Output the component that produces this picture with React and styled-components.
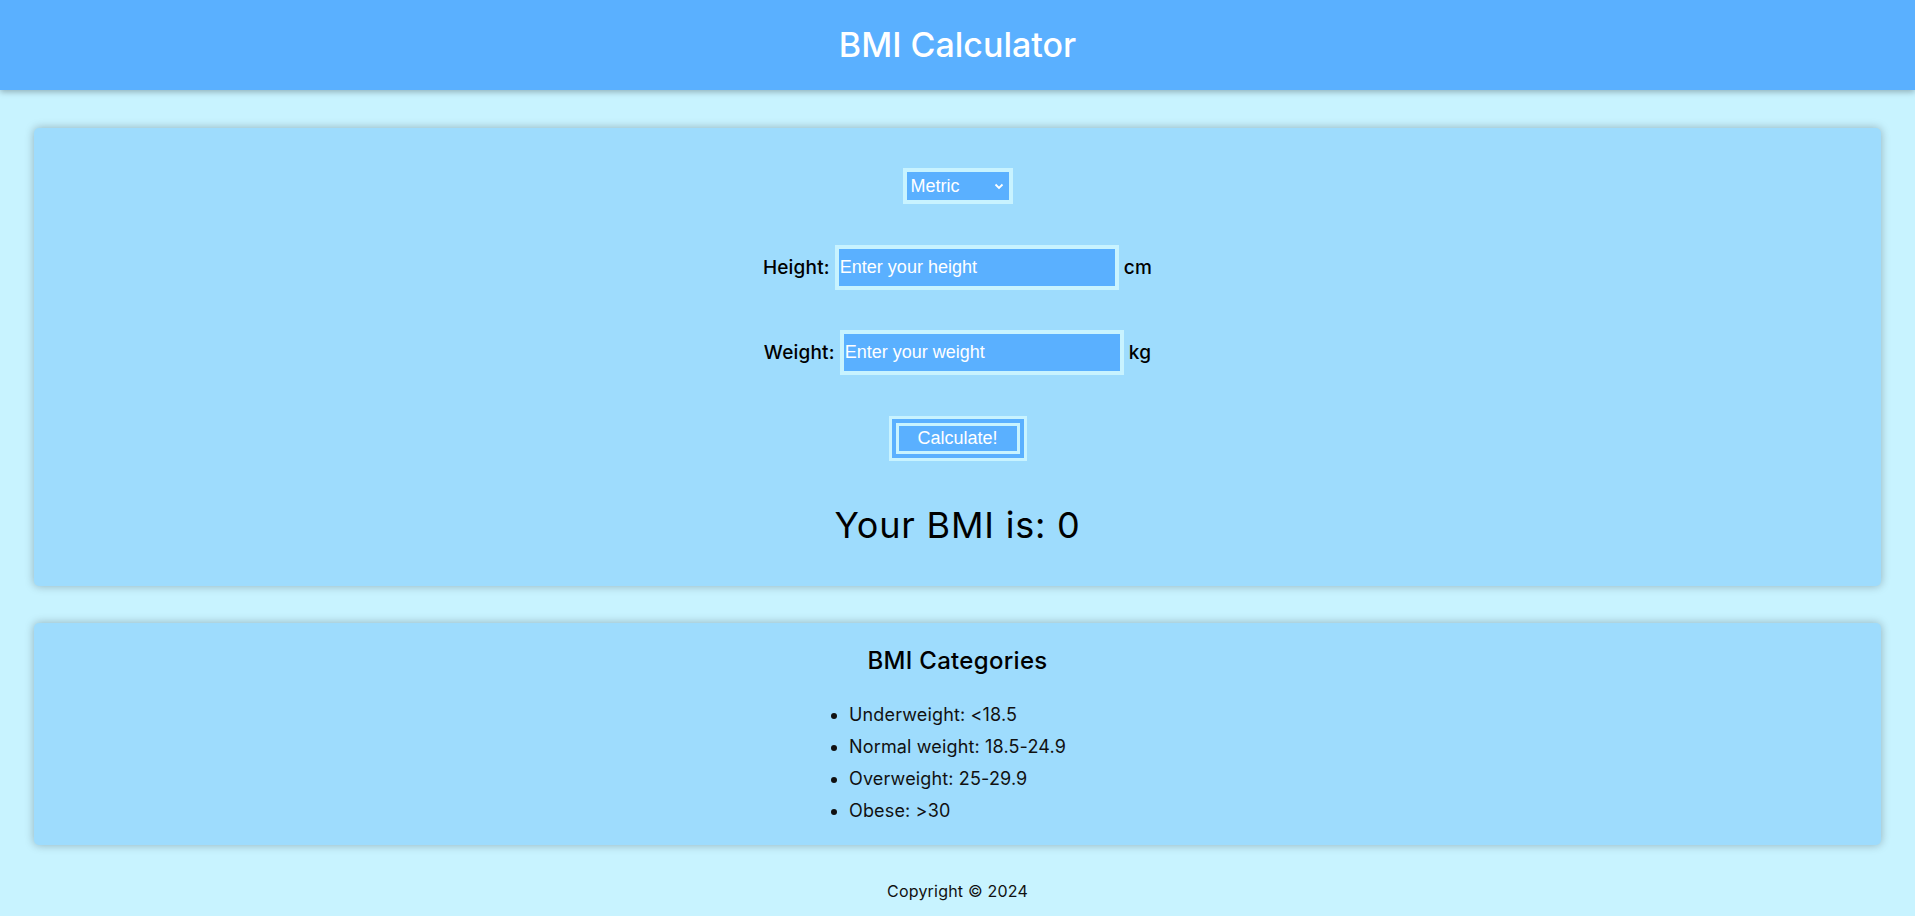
import React, { useState } from "react";
import styled, { createGlobalStyle } from "styled-components";

const GlobalStyle = createGlobalStyle`
  html, body {
    margin: 0;
    padding: 0;
    background: #c8f3ff;
    font-family: Inter, "Open Sans", "Noto Sans", sans-serif;
    color: #000;
  }
  * { box-sizing: border-box; }
`;

const Header = styled.header`
  height: 90px;
  background: #5ab0ff;
  display: flex;
  align-items: center;
  justify-content: center;
  box-shadow: 0 2px 6px rgba(0, 0, 0, 0.28);
  position: relative;
  z-index: 1;
`;

const Title = styled.h1`
  margin: 0;
  font-size: 34px;
  line-height: 40px;
  font-weight: 500;
  color: #fff;
`;

const Main = styled.main`
  display: flex;
  flex-direction: column;
  gap: 37px;
  padding: 38px 34px 0;
`;

const Card = styled.section`
  background: #9edcfd;
  border-radius: 5px;
  box-shadow: 0 0 10px rgba(0, 0, 0, 0.28);
`;

const CalcCard = styled(Card)`
  display: flex;
  flex-direction: column;
  align-items: center;
  gap: 40px;
  padding: 40px 0 39px;
`;

const SelectWrap = styled.div`
  position: relative;
  width: 110px;
  height: 36px;
  margin-bottom: 1px;
`;

const UnitSelect = styled.select`
  appearance: none;
  -webkit-appearance: none;
  width: 100%;
  height: 100%;
  border: 4px solid #c8f3ff;
  border-radius: 0;
  background: #5ab0ff;
  color: #fff;
  font-family: "Liberation Sans", Arial, sans-serif;
  font-size: 18px;
  padding: 0 4px;
  outline: none;
`;

const Chevron = styled.svg`
  position: absolute;
  right: 9px;
  top: 15px;
  pointer-events: none;
`;

const Row = styled.div`
  display: flex;
  align-items: center;
  gap: 5px;
`;

const Label = styled.label`
  font-size: 19px;
  font-weight: 500;
  letter-spacing: 0.2px;
`;

const Unit = styled.span`
  font-size: 19px;
  font-weight: 500;
  letter-spacing: 0.2px;
`;

const NumberInput = styled.input`
  width: 284px;
  height: 45px;
  border: 4px solid #c8f3ff;
  border-radius: 0;
  background: #5ab0ff;
  color: #fff;
  font-family: "Liberation Sans", Arial, sans-serif;
  font-size: 18px;
  padding: 0 0 0 1px;
  outline: none;
  &::placeholder {
    color: #fff;
    opacity: 1;
  }
`;

const CalcButton = styled.button`
  width: 138px;
  height: 45px;
  margin-top: 1px;
  border: 10px double #c8f3ff;
  background: #5ab0ff;
  color: #fff;
  font-family: "Liberation Sans", Arial, sans-serif;
  font-size: 18px;
  padding: 0;
  cursor: pointer;
`;

const Result = styled.p`
  margin: 2px 0 0;
  font-size: 36px;
  line-height: 44px;
  font-weight: 400;
  letter-spacing: 0.8px;
`;

const CategoryCard = styled(Card)`
  display: flex;
  flex-direction: column;
  align-items: center;
  padding: 23px 0 18px;
`;

const CategoryTitle = styled.h2`
  margin: 0;
  font-size: 24px;
  line-height: 30px;
  font-weight: 500;
  letter-spacing: 0.3px;
`;

const CategoryList = styled.ul`
  display: inline-block;
  text-align: left;
  margin: 23px 0 0;
  padding: 0 40px;
`;

const CategoryItem = styled.li`
  font-size: 18px;
  line-height: 32px;
  color: #111;
  letter-spacing: 0.15px;
`;

const Footer = styled.footer`
  text-align: center;
  font-size: 16px;
  line-height: 20px;
  margin-top: 36px;
  padding-bottom: 8px;
  color: #111;
  letter-spacing: 0.2px;
`;

const categories = [
  "Underweight: <18.5",
  "Normal weight: 18.5-24.9",
  "Overweight: 25-29.9",
  "Obese: >30",
];

export default function App() {
  const [system, setSystem] = useState("metric");
  const [height, setHeight] = useState("");
  const [weight, setWeight] = useState("");
  const [bmi, setBmi] = useState(0);
  const metric = system === "metric";

  const calculate = () => {
    const h = parseFloat(height);
    const w = parseFloat(weight);
    if (!h || !w) return setBmi(0);
    const value = metric ? w / ((h / 100) * (h / 100)) : (703 * w) / (h * h);
    setBmi(Math.round(value * 10) / 10);
  };

  return (
    <>
      <GlobalStyle />
      <Header>
        <Title>BMI Calculator</Title>
      </Header>
      <Main>
        <CalcCard>
          <SelectWrap>
            <UnitSelect value={system} onChange={(e) => setSystem(e.target.value)}>
              <option value="metric">Metric</option>
              <option value="imperial">Imperial</option>
            </UnitSelect>
            <Chevron width="10" height="7" viewBox="0 0 10 7">
              <polyline points="1.5,1.5 5,5 8.5,1.5" fill="none" stroke="#fff" strokeWidth="1.8" />
            </Chevron>
          </SelectWrap>
          <Row>
            <Label htmlFor="height">Height:</Label>
            <NumberInput
              id="height"
              placeholder="Enter your height"
              value={height}
              onChange={(e) => setHeight(e.target.value)}
            />
            <Unit>{metric ? "cm" : "in"}</Unit>
          </Row>
          <Row>
            <Label htmlFor="weight">Weight:</Label>
            <NumberInput
              id="weight"
              placeholder="Enter your weight"
              value={weight}
              onChange={(e) => setWeight(e.target.value)}
            />
            <Unit>{metric ? "kg" : "lb"}</Unit>
          </Row>
          <CalcButton onClick={calculate}>Calculate!</CalcButton>
          <Result>Your BMI is: {bmi}</Result>
        </CalcCard>
        <CategoryCard>
          <CategoryTitle>BMI Categories</CategoryTitle>
          <CategoryList>
            {categories.map((c) => (
              <CategoryItem key={c}>{c}</CategoryItem>
            ))}
          </CategoryList>
        </CategoryCard>
      </Main>
      <Footer>Copyright © 2024</Footer>
    </>
  );
}
